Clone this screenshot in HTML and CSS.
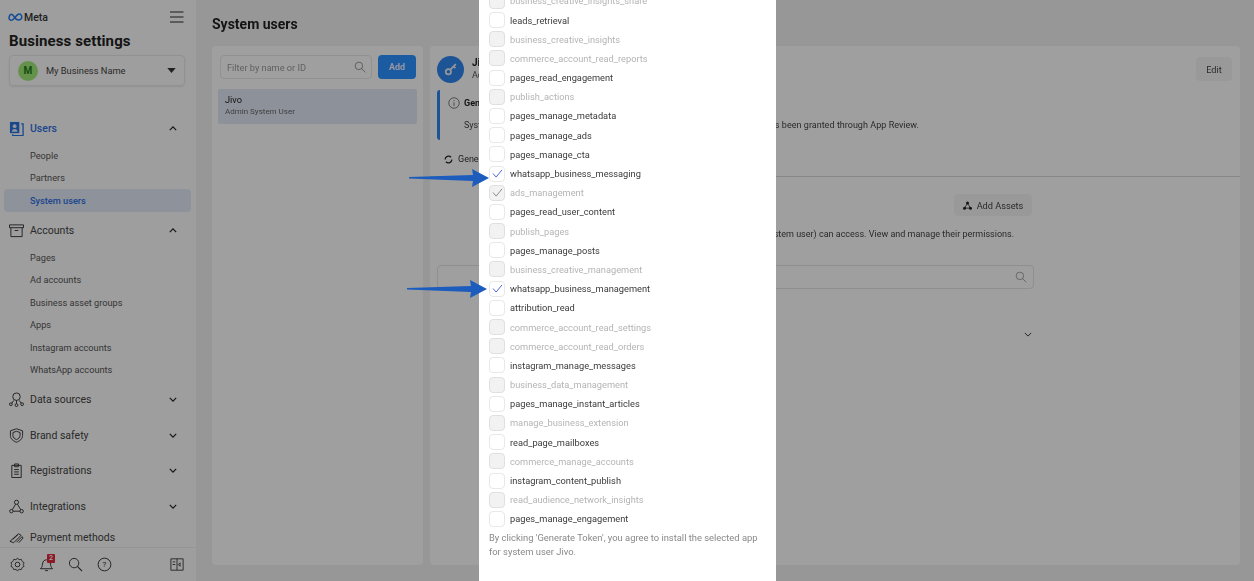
FILE: index.html
```html
<!DOCTYPE html>
<html lang="en">
<head>
<meta charset="utf-8">
<title>System users - Business settings</title>
<link rel="stylesheet" href="styles.css">
</head>
<body>
<div class="page">
  <aside class="sidebar">
    <div class="brand-row">
      <div class="brand">
        <svg class="meta-logo" viewBox="0 0 24 12" width="15" height="8"><path d="M2 9.500C1 6 3 1.500 5.500 1.500S10 6 12 8.500 16 11 18.500 10.500 23 7 21.500 3.500 17 .5 14.500 3 10.500 8 8 10 3 11 2 9.500Z" fill="none" stroke="#1f78ee" stroke-width="2.400"/></svg>
        <span>Meta</span>
      </div>
      <svg class="burger" viewBox="0 0 14 12" width="14" height="12"><path d="M0 1h13.500M0 6h13.500M0 11h13.500" stroke="#2b2b2b" stroke-width="1.200"/></svg>
    </div>
    <h1 class="app-title">Business settings</h1>
    <div class="biz-select">
      <span class="biz-avatar">M</span>
      <span class="biz-name">My Business Name</span>
      <svg viewBox="0 0 10 6" width="9" height="5"><path d="M0 0h10L5 6Z" fill="#333"/></svg>
    </div>
    <nav class="nav">
      <div class="nav-head active">
        <svg class="nav-ic" viewBox="0 0 16 16"><path d="M1 1h10v12H1z" fill="#2a72e0"/><circle cx="6" cy="5.500" r="2" fill="#e9edf5"/><path d="M3 11.500c0-4 6-4 6 0z" fill="#e9edf5"/><path d="M13 3h2v12.500H4V14" fill="none" stroke="#2a72e0" stroke-width="1.400"/></svg>
        <span class="nav-label">Users</span>
        <svg class="chev" viewBox="0 0 10 6"><path d="M1 5l4-4 4 4" fill="none" stroke="#222" stroke-width="1.500"/></svg>
      </div>
      <a class="nav-sub">People</a>
      <a class="nav-sub">Partners</a>
      <a class="nav-sub current">System users</a>
      <div class="nav-head head-accounts">
        <svg class="nav-ic" viewBox="0 0 16 16"><path d="M.5 2h15v3H.5zM2 5v9.500h12V5M6 8h4" fill="none" stroke="#333" stroke-width="1"/></svg>
        <span class="nav-label">Accounts</span>
        <svg class="chev" viewBox="0 0 10 6"><path d="M1 5l4-4 4 4" fill="none" stroke="#222" stroke-width="1.500"/></svg>
      </div>
      <a class="nav-sub">Pages</a>
      <a class="nav-sub">Ad accounts</a>
      <a class="nav-sub">Business asset groups</a>
      <a class="nav-sub">Apps</a>
      <a class="nav-sub">Instagram accounts</a>
      <a class="nav-sub">WhatsApp accounts</a>
      <div class="nav-head closed first-closed">
        <svg class="nav-ic" viewBox="0 0 16 16"><circle cx="8" cy="5" r="4" fill="none" stroke="#333"/><circle cx="2" cy="13" r="1.500" fill="none" stroke="#333"/><circle cx="8" cy="14" r="1.500" fill="none" stroke="#333"/><circle cx="14" cy="13" r="1.500" fill="none" stroke="#333"/><path d="M3 12l2-3M8 9v3.500M13 12l-2-3" stroke="#333" fill="none"/></svg>
        <span class="nav-label">Data sources</span>
        <svg class="chev" viewBox="0 0 10 6"><path d="M1 1l4 4 4-4" fill="none" stroke="#222" stroke-width="1.500"/></svg>
      </div>
      <div class="nav-head closed">
        <svg class="nav-ic" viewBox="0 0 16 16"><path d="M8 .800l6.500 2.200v5c0 3.500-3 6-6.500 7.200C4.500 14 1.500 11.500 1.500 8V3Z" fill="none" stroke="#333"/><path d="M8 3.500l3.800 1.300v3.200c0 2-1.800 3.600-3.800 4.400-2-.8-3.800-2.400-3.800-4.400V4.800Z" fill="none" stroke="#333"/></svg>
        <span class="nav-label">Brand safety</span>
        <svg class="chev" viewBox="0 0 10 6"><path d="M1 1l4 4 4-4" fill="none" stroke="#222" stroke-width="1.500"/></svg>
      </div>
      <div class="nav-head closed">
        <svg class="nav-ic" viewBox="0 0 16 16"><path d="M3 2.500h10v13H3zM6 1h4v3H6zM5.500 7h5M5.500 9.500h5M5.500 12h5" fill="none" stroke="#333"/></svg>
        <span class="nav-label">Registrations</span>
        <svg class="chev" viewBox="0 0 10 6"><path d="M1 1l4 4 4-4" fill="none" stroke="#222" stroke-width="1.500"/></svg>
      </div>
      <div class="nav-head closed">
        <svg class="nav-ic" viewBox="0 0 16 16"><circle cx="8" cy="3.500" r="2.200" fill="none" stroke="#333"/><circle cx="2.500" cy="13" r="1.800" fill="none" stroke="#333"/><circle cx="13.500" cy="13" r="1.800" fill="none" stroke="#333"/><path d="M7 5.500l-3.500 6M9 5.500l3.500 6M4.300 13h7.400" fill="none" stroke="#333"/></svg>
        <span class="nav-label">Integrations</span>
        <svg class="chev" viewBox="0 0 10 6"><path d="M1 1l4 4 4-4" fill="none" stroke="#222" stroke-width="1.500"/></svg>
      </div>
      <div class="nav-head closed last-head">
        <svg class="nav-ic" viewBox="0 0 16 16"><path d="M1 11L10 3l3 1.500-8 8L1 11ZM4 9l5.500-5M8 12l6-6 1 1.500-4.500 5" fill="none" stroke="#333"/></svg>
        <span class="nav-label">Payment methods</span>
      </div>
    </nav>
    <div class="side-foot">
      <svg viewBox="0 0 16 16" width="15" height="15"><circle cx="8" cy="8" r="2.500" fill="none" stroke="#333"/><path d="M8 1l1.500 2 2.500-.5 1 2.300 2 1.200-.8 2 .8 2-2 1.200-1 2.300-2.500-.5L8 15l-1.500-2-2.500.5-1-2.300L1 10l.8-2L1 6l2-1.200 1-2.300 2.500.5Z" fill="none" stroke="#333" stroke-width=".9"/></svg>
      <span class="bell">
        <svg viewBox="0 0 16 16" width="15" height="15"><path d="M1.500 12.500c1.800-1.500 2-3 2.200-5C4 4.500 5.800 3 8 3s4 1.500 4.300 4.500c.2 2 .4 3.500 2.200 5ZM6.500 14.500h3" fill="none" stroke="#333"/></svg>
        <b class="badge">2</b>
      </span>
      <svg viewBox="0 0 16 16" width="15" height="15"><circle cx="6.500" cy="6.500" r="5" fill="none" stroke="#333"/><path d="M10 10l5 5" stroke="#333" stroke-width="1.200"/></svg>
      <svg viewBox="0 0 16 16" width="15" height="15"><circle cx="8" cy="8" r="6.800" fill="none" stroke="#333"/><text x="8" y="11" font-size="8.500" text-anchor="middle" fill="#333" font-family="Roboto, sans-serif">?</text></svg>
      <svg class="collapse" viewBox="0 0 16 16" width="14" height="15"><path d="M1 1.500h14v13H1zM8 1.500v13M3 5h3M3 8h3M11.500 6v4L9.500 8Z" fill="none" stroke="#333"/></svg>
    </div>
  </aside>

  <main class="main">
    <h2 class="page-title">System users</h2>
    <div class="columns">
      <section class="card list-card">
        <div class="filter-row">
          <div class="filter">
            <span>Filter by name or ID</span>
            <svg viewBox="0 0 16 16" width="12" height="12"><circle cx="6.500" cy="6.500" r="5" fill="none" stroke="#777"/><path d="M10 10l5 5" stroke="#777"/></svg>
          </div>
          <button class="btn-add">Add</button>
        </div>
        <div class="user-row">
          <div class="user-name">Jivo</div>
          <div class="user-role">Admin System User</div>
        </div>
      </section>

      <section class="card detail-card">
        <div class="detail-head">
          <span class="key-badge"><svg viewBox="0 0 16 16" width="14" height="14"><circle cx="5" cy="11" r="3" fill="none" stroke="#e8ecf4" stroke-width="2"/><path d="M7.300 8.700L13.500 2.500M11 5l2 2" stroke="#e8ecf4" stroke-width="2" fill="none"/></svg></span>
          <div class="detail-id">
            <div class="detail-name">Jivo</div>
            <div class="detail-role">Admin</div>
          </div>
          <button class="btn-plain btn-edit">Edit</button>
        </div>
        <div class="notice">
          <svg viewBox="0 0 16 16" width="12" height="12"><circle cx="8" cy="8" r="7" fill="none" stroke="#555"/><path d="M8 7v5M8 4v1.500" stroke="#555"/></svg>
          <div class="notice-body">
            <div class="notice-title">Generate tokens</div>
            <div class="notice-text">System users can only generate tokens with the permissions that your app has been granted through App Review.</div>
          </div>
        </div>
        <div class="token-row">
          <svg viewBox="0 0 16 16" width="9" height="9"><path d="M14 8a6 6 0 0 1-10.500 4M2 8a6 6 0 0 1 10.500-4" fill="none" stroke="#222" stroke-width="2.200"/></svg>
          <span>Generate New Token</span>
        </div>
        <div class="assets">
          <div class="assets-bar">
            <button class="btn-plain btn-assets">
              <svg viewBox="0 0 12 12" width="9" height="9"><circle cx="6" cy="2.500" r="2" fill="#222"/><circle cx="2" cy="9.500" r="2" fill="#222"/><circle cx="10" cy="9.500" r="2" fill="#222"/><path d="M6 3L2 9.500h8Z" fill="none" stroke="#222"/></svg>
              Add Assets
            </button>
          </div>
          <p class="assets-text">Here is a list of the assets that Jivo (system user) can access. View and manage their permissions.</p>
          <div class="asset-search">
            <svg viewBox="0 0 16 16" width="12" height="12"><circle cx="6.500" cy="6.500" r="5" fill="none" stroke="#888"/><path d="M10 10l5 5" stroke="#888"/></svg>
          </div>
          <div class="asset-chev">
            <svg viewBox="0 0 10 6" width="8" height="5"><path d="M1 1l4 4 4-4" fill="none" stroke="#333" stroke-width="1.200"/></svg>
          </div>
        </div>
      </section>
    </div>
  </main>
</div>

<div class="scrim"></div>

<div class="modal">
  <ul class="perm-list">
    <li class="off"><i class="box"></i>business_creative_insights_share</li>
    <li><i class="box"></i>leads_retrieval</li>
    <li class="off"><i class="box"></i>business_creative_insights</li>
    <li class="off"><i class="box"></i>commerce_account_read_reports</li>
    <li><i class="box"></i>pages_read_engagement</li>
    <li class="off"><i class="box"></i>publish_actions</li>
    <li><i class="box"></i>pages_manage_metadata</li>
    <li><i class="box"></i>pages_manage_ads</li>
    <li><i class="box"></i>pages_manage_cta</li>
    <li><i class="box"><svg viewBox="0 0 12 10" width="11" height="9"><path d="M1 5l3.500 4L11 1" fill="none" stroke="#4f63dc" stroke-width="1.100"/></svg></i>whatsapp_business_messaging</li>
    <li class="off"><i class="box"><svg viewBox="0 0 12 10" width="11" height="9"><path d="M1 5l3.500 4L11 1" fill="none" stroke="#8a8a8a" stroke-width="1.100"/></svg></i>ads_management</li>
    <li><i class="box"></i>pages_read_user_content</li>
    <li class="off"><i class="box"></i>publish_pages</li>
    <li><i class="box"></i>pages_manage_posts</li>
    <li class="off"><i class="box"></i>business_creative_management</li>
    <li><i class="box"><svg viewBox="0 0 12 10" width="11" height="9"><path d="M1 5l3.500 4L11 1" fill="none" stroke="#4f63dc" stroke-width="1.100"/></svg></i>whatsapp_business_management</li>
    <li><i class="box"></i>attribution_read</li>
    <li class="off"><i class="box"></i>commerce_account_read_settings</li>
    <li class="off"><i class="box"></i>commerce_account_read_orders</li>
    <li><i class="box"></i>instagram_manage_messages</li>
    <li class="off"><i class="box"></i>business_data_management</li>
    <li><i class="box"></i>pages_manage_instant_articles</li>
    <li class="off"><i class="box"></i>manage_business_extension</li>
    <li><i class="box"></i>read_page_mailboxes</li>
    <li class="off"><i class="box"></i>commerce_manage_accounts</li>
    <li><i class="box"></i>instagram_content_publish</li>
    <li class="off"><i class="box"></i>read_audience_network_insights</li>
    <li><i class="box"></i>pages_manage_engagement</li>
  </ul>
  <p class="modal-note">By clicking 'Generate Token', you agree to install the selected app for system user Jivo.</p>
</div>

<svg class="arrow arrow-a" viewBox="0 0 80 18" width="80" height="18"><path d="M0 8L64 6 63 0 80 9 63 18 64 12 0 9.500Z" fill="#1b5cbd"/></svg>
<svg class="arrow arrow-b" viewBox="0 0 80 18" width="80" height="18"><path d="M0 8L64 6 63 0 80 9 63 18 64 12 0 9.500Z" fill="#1b5cbd"/></svg>
</body>
</html>
```

FILE: styles.css
```css
* { box-sizing: border-box; }
html, body { margin: 0; height: 100%; overflow: hidden; }
body {
  font-family: Roboto, "Liberation Sans", sans-serif;
  color: #1c1e21;
  background: #f0f0f0;
  position: relative;
  width: 1254px;
  height: 581px;
  filter: blur(0.5px);
}
.page { display: flex; height: 581px; }

/* Sidebar */
.sidebar {
  width: 196px;
  flex: none;
  height: 581px;
  background: #fafafa;
  display: flex;
  flex-direction: column;
  padding: 11px 0 0;
}
.brand-row {
  display: flex;
  justify-content: space-between;
  align-items: center;
  padding: 0 12px 0 8px;
  height: 12px;
}
.brand { display: flex; align-items: center; gap: 1px; font-size: 10.500px; font-weight: 500; color: #333; }
.meta-logo { display: block; }
.app-title { margin: 7px 0 0 9px; font-size: 15px; line-height: 22px; font-weight: 700; color: #222; letter-spacing: .1px; }
.biz-select {
  margin: 3px 11px 0 9px;
  height: 31px;
  border: 1px solid #e6e6e6;
  border-radius: 4px;
  display: flex;
  align-items: center;
  padding: 0 8px;
  box-shadow: 0 1px 2px rgba(0,0,0,.08);
}
.biz-avatar {
  width: 20px; height: 20px; border-radius: 50%;
  background: #9fe878; color: #1f7a1a;
  font-size: 10px; font-weight: 700;
  display: flex; align-items: center; justify-content: center;
}
.biz-name { flex: 1; margin-left: 8px; font-size: 9.300px; color: #444; }
.nav { flex: 1; overflow: hidden; margin-top: 33px; min-height: 0; }
.nav-head {
  display: flex; align-items: center;
  height: 18px;
  padding: 0 19px 0 9px;
  font-size: 10.500px;
  color: #444;
}
.nav-ic { width: 15px; height: 15px; flex: none; }
.nav-label { flex: 1; margin-left: 6px; }
.chev { width: 8px; height: 5px; flex: none; }
.nav-head.active { color: #2f6fe0; font-weight: 500; }
.nav-sub {
  display: flex; align-items: center;
  height: 22.500px;
  margin: 0 5px 0 4px;
  padding-left: 26px;
  font-size: 9.200px;
  color: #555;
  border-radius: 4px;
}
.nav-head.active + .nav-sub { margin-top: 7px; }
.nav-sub.current { background: #e0e8f5; color: #2f6fe0; font-weight: 500; }
.head-accounts { margin-top: 10px; }
.head-accounts + .nav-sub { margin-top: 6.500px; }
.first-closed { margin-top: 9.500px; }
.closed + .closed { margin-top: 17.700px; }
.closed + .last-head { margin-top: 15px; }
.last-head { align-items: flex-start; }
.side-foot {
  height: 34px;
  flex: none;
  border-top: 1px solid #ececec;
  display: flex;
  align-items: center;
  gap: 14px;
  padding: 0 12px 0 10px;
}
.bell { position: relative; display: flex; }
.badge {
  position: absolute; top: -3px; left: 8px;
  width: 8px; height: 9px;
  background: #e0293a; color: #fff;
  font-size: 7px; line-height: 9px; font-weight: 500;
  text-align: center; border-radius: 1px;
}
.collapse { margin-left: auto; }

/* Main */
.main { flex: 1; padding: 16px 14px 16px 16px; display: flex; flex-direction: column; min-width: 0; }
.page-title { margin: 0; font-size: 14px; line-height: 16px; font-weight: 700; color: #222; }
.columns { flex: 1; display: flex; gap: 7px; margin-top: 14px; min-height: 0; }
.card { background: #fcfcfc; border-radius: 4px; }
.list-card { width: 211px; flex: none; padding: 9px 6px 0; }
.filter-row { display: flex; gap: 6px; padding: 0 1px 0 2px; }
.filter {
  flex: 1; height: 24px;
  border: 1px solid #e6e6e6; border-radius: 4px;
  display: flex; align-items: center; justify-content: space-between;
  padding: 0 5px 0 6px;
  font-size: 9.200px; color: #999;
}
.btn-add {
  width: 38px; height: 24px; border: 0; border-radius: 4px;
  background: #2b90ff; color: #eef;
  font: 700 9px Roboto, sans-serif;
}
.user-row { margin-top: 10px; height: 35px; background: #dfe6f2; border-radius: 2px; padding: 5px 7px; }
.user-name { font-size: 9.200px; line-height: 12px; color: #222; }
.user-role { font-size: 8px; line-height: 12px; color: #666; }

.detail-card { flex: 1; padding: 11px 8px 0 7px; position: relative; min-width: 0; }
.detail-head { display: flex; align-items: center; height: 24px; }
.key-badge {
  width: 27px; height: 27px; border-radius: 50%;
  background: #2f85ee;
  display: flex; align-items: center; justify-content: center;
  flex: none;
}
.detail-id { margin-left: 8px; flex: 1; }
.detail-name { font-size: 10px; font-weight: 700; line-height: 12px; }
.detail-role { font-size: 9px; line-height: 12px; color: #555; }
.btn-plain {
  background: #f3f3f3; border: 0; border-radius: 4px;
  font: 400 9.200px Roboto, sans-serif; color: #444;
}
.btn-edit { width: 36px; height: 24px; }
.notice {
  margin-top: 9px;
  height: 50px;
  border-left: 3px solid #2f85ee;
  border-radius: 3px;
  display: flex;
  gap: 4px;
  padding: 7px 0 0 8px;
}
.notice-body { flex: 1; min-width: 0; }
.notice-title { font-size: 9px; font-weight: 700; line-height: 12px; }
.notice-text { margin-top: 10px; font-size: 9px; line-height: 12px; white-space: nowrap; color: #444; word-spacing: .2px; }
.token-row {
  margin-top: 9px; height: 20px; padding-left: 7px;
  display: flex; align-items: center; gap: 5px;
  font-size: 9px; color: #333;
}
.assets { border-top: 1px solid #d8d8d8; margin: 7px -8px 0 -7px; padding: 17px 206px 0 7px; }
.assets-bar { display: flex; justify-content: flex-end; padding-right: 2px; }
.btn-assets {
  width: 78px; height: 22px;
  display: flex; align-items: center; justify-content: center; gap: 5px;
}
.assets-text { margin: 12px 0 0; font-size: 9px; line-height: 12px; color: #444; text-align: right; padding-right: 20px; white-space: nowrap; }
.asset-search {
  margin-top: 25px; height: 24px;
  border: 1px solid #e2e2e2; border-radius: 4px;
  display: flex; align-items: center; justify-content: flex-end;
  padding-right: 6px;
}
.asset-chev { display: flex; justify-content: flex-end; padding: 43px 2px 0 0; }

/* Overlay */
.scrim { position: absolute; inset: 0; background: rgba(0,0,0,.37); }
.modal {
  position: absolute; top: 0; left: 479px;
  width: 297px; height: 581px;
  background: #fff;
  overflow: hidden;
  display: flex; flex-direction: column; justify-content: flex-end;
  padding: 0 10px 22px 10px;
}
.perm-list { list-style: none; margin: 0; padding: 0; flex: none; }
.perm-list li {
  display: flex; align-items: center;
  height: 19.200px;
  font-size: 9.250px;
  color: #3a3a3a;
  white-space: nowrap;
}
.perm-list li.off { color: #b4b4b4; }
.box {
  width: 16px; height: 16px; flex: none;
  margin-right: 5px;
  border: 1px solid #e8e8e8; border-radius: 4px;
  display: flex; align-items: center; justify-content: center;
  background: #fff;
}
.off .box { background: #f2f2f2; border-color: #e0e0e0; }
.modal-note { margin: 2.500px 0 0; font-size: 9.400px; line-height: 14px; color: #888; }
.arrow { position: absolute; }
.arrow-a { left: 409px; top: 169px; }
.arrow-b { left: 407px; top: 280px; }
```
